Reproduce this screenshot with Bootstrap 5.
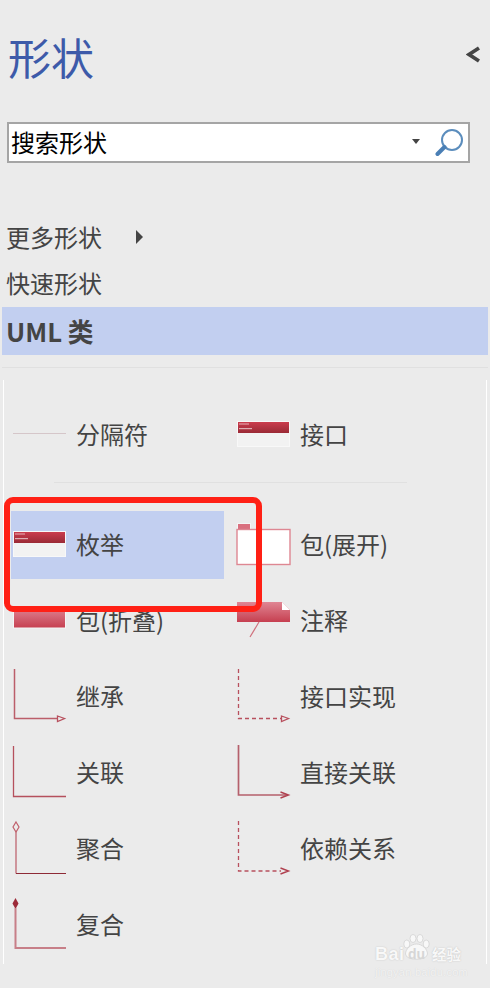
<!DOCTYPE html>
<html lang="zh-CN">
<head>
  <meta charset="UTF-8" />
  <title>形状</title>
  <link rel="stylesheet" href="https://cdn.jsdelivr.net/npm/bootstrap@5.3.0/dist/css/bootstrap.min.css" />
  <style>
    body {
      background: #ebebeb;
      width: 490px;
      height: 988px;
      overflow: hidden;
      font-family: "Noto Sans CJK SC", "Liberation Sans", sans-serif;
      color: #444;
    }
    .pane { position: relative; width: 490px; height: 988px; }
    .pane-head { height: 122px; padding: 31px 10px 0 8px; }
    .pane-title { font-size: 43px; line-height: 50px; color: #3d5aa9; font-weight: 400; margin: 0; }
    .pane-toggle { margin-top: 15px; }
    .search-box {
      margin-left: 7px;
      width: 463px;
      height: 41px;
      background: #fff;
      border: 2px solid #a5a5a5;
      padding: 0 5px 0 2px;
      font-size: 24px;
      line-height: 37px;
      color: #000;
    }
    .search-text { padding-bottom: 3px; }
    .search-caret {
      width: 0; height: 0;
      border-left: 4.5px solid transparent;
      border-right: 4.5px solid transparent;
      border-top: 5px solid #444;
      margin-right: 15px;
      margin-bottom: 3px;
    }
    .stencil-list { margin: 52px 2px 0 2px; border-radius: 0; background: transparent; }
    .stencil-list .list-group-item {
      background: transparent;
      border: 0;
      border-radius: 0;
      color: #444;
      font-size: 24px;
      line-height: 44px;
      height: 46px;
      padding: 0 0 2px 4px;
    }
    .stencil-list .list-group-item.current { background: #c2cff0; height: 48px; line-height: 47px; padding: 0 0 1px 4px; font-size: 25.7px; font-weight: 700; }
    .more-arrow {
      width: 0; height: 0;
      border-top: 7px solid transparent;
      border-bottom: 7px solid transparent;
      border-left: 7px solid #444;
      margin-left: 34px;
    }
    .pane-rule { margin: 12px 2px 0; height: 1px; background: #e0e0e0; }
    .shape-panel {
      margin: 12px 0 0 3px;
      width: 484px;
      height: 584px;
      border-left: 1px solid #fff;
      border-right: 1px solid #fff;
      padding: 21px 0 0 7px;
    }
    .shape-grid { display: grid; grid-template-columns: 213px 213px; column-gap: 11px; row-gap: 8px; }
    .shape-item { height: 68px; font-size: 24px; line-height: 66px; white-space: nowrap; }
    .shape-item svg { flex: none; margin-right: 5px; }
    .shape-item.picked { background: #c2cff0; }
    .group-rule { height: 1px; background: #e0e0e0; margin: 13px 0 28px 43px; width: 353px; }
    .red-frame {
      position: absolute;
      left: 4px; top: 497px;
      width: 258px; height: 115px;
      border: 6px solid #ff2015;
      border-radius: 9px;
    }
    .watermark {
      position: absolute;
      left: 375px; top: 934px;
      width: 90px; height: 42px;
      color: #f8f8f8;
      font-family: "Liberation Sans", sans-serif;
      text-shadow: 0 0 1.5px #bdbdbd;
    }
    .wm-bai { position: absolute; left: 0; top: 10px; font-size: 18px; line-height: 20px; font-weight: 700; letter-spacing: 0.5px; }
    .wm-cn { position: absolute; left: 57px; top: 10px; font-family: "Noto Sans CJK SC", sans-serif; font-size: 14.5px; line-height: 20px; font-weight: 700; white-space: nowrap; }
    .wm-url { position: absolute; left: 0; top: 32px; font-size: 11px; line-height: 12px; letter-spacing: 0.25px; white-space: nowrap; color: #f3f3f3; text-shadow: 0 0 1px #cfcfcf; }
    .wm-paw { position: absolute; left: 28px; top: 0; }
    .wm-du { position: absolute; left: 33px; top: 13px; font-size: 14px; line-height: 14px; font-weight: 700; color: #d6d6d6; text-shadow: none; }
  </style>
</head>
<body>
  <div class="pane">
    <!-- title and collapse arrow -->
    <div class="pane-head d-flex justify-content-between align-items-start">
      <h1 class="pane-title">形状</h1>
      <svg class="pane-toggle" width="14" height="17" viewBox="0 0 14 17"><path d="M13 2 L3 8.5 L13 15" fill="none" stroke="#444" stroke-width="3.8"/></svg>
    </div>

    <div class="search-box d-flex align-items-center">
      <span class="search-text flex-grow-1">搜索形状</span>
      <span class="search-caret"></span>
      <svg width="28" height="28" viewBox="0 0 28 28"><circle cx="17" cy="11" r="10" fill="#fff" stroke="#5b8dbd" stroke-width="2"/><path d="M9.5 18 L2.5 25" stroke="#4a7fb5" stroke-width="4" stroke-linecap="round"/></svg>
    </div>

    <div class="list-group stencil-list">
      <div class="list-group-item d-flex align-items-center">更多形状<span class="more-arrow"></span></div>
      <div class="list-group-item">快速形状</div>
      <div class="list-group-item current">UML 类</div>
    </div>
    <div class="pane-rule"></div>

    <div class="shape-panel">
      <div class="shape-grid">
        <div class="shape-item d-flex">
          <svg width="60" height="68"><line x1="2" y1="32.5" x2="55" y2="32.5" stroke="#d5c6c9"/></svg>分隔符
        </div>
        <div class="shape-item d-flex">
          <svg width="60" height="68"><use href="#classShape"/></svg>接口
        </div>
      </div>
      <div class="group-rule"></div>
      <div class="shape-grid">
        <div class="shape-item picked d-flex">
          <svg width="60" height="68"><use href="#classShape"/></svg>枚举
        </div>
        <div class="shape-item d-flex">
          <svg width="60" height="68">
            <rect x="2.5" y="12.5" width="13" height="6" fill="#d9707f" stroke="#f5f5f5"/>
            <rect x="2" y="18.5" width="53" height="35" fill="#fff" stroke="#de8792" stroke-width="1.4"/>
          </svg>包(展开)
        </div>
        <div class="shape-item d-flex">
          <svg width="60" height="68"><rect x="2.5" y="20" width="52" height="21" fill="url(#pinkFade)" stroke="#f5f5f5"/></svg>包(折叠)
        </div>
        <div class="shape-item d-flex">
          <svg width="60" height="68">
            <path d="M2 15 H47 L55 23 V35 H2 Z" fill="url(#pinkFade)"/>
            <path d="M47 15 L55 23 H47 Z" fill="#fff"/>
            <line x1="24" y1="35" x2="15" y2="50" stroke="#d0707c" stroke-width="1.2"/>
          </svg>注释
        </div>
        <div class="shape-item d-flex">
          <svg width="60" height="68">
            <path d="M3.5 6 V55.5 H46" fill="none" stroke="#bb5e6a" stroke-width="1.5"/>
            <path d="M46.5 53 L53.5 55.5 L46.5 58.5 Z" fill="none" stroke="#b8505e" stroke-width="1.3"/>
          </svg>继承
        </div>
        <div class="shape-item d-flex">
          <svg width="60" height="68">
            <path d="M3.5 6 V55.5 H46" fill="none" stroke="#b8505e" stroke-width="1.3" stroke-dasharray="4 3"/>
            <path d="M46.5 53 L53.5 55.5 L46.5 58.5 Z" fill="none" stroke="#b8505e" stroke-width="1.3"/>
          </svg>接口实现
        </div>
        <div class="shape-item d-flex">
          <svg width="60" height="68"><path d="M2.5 7 V57.5 H55" fill="none" stroke="#b5505d" stroke-width="1.3"/></svg>关联
        </div>
        <div class="shape-item d-flex">
          <svg width="60" height="68">
            <path d="M3.5 6 V56 H53" fill="none" stroke="#b5606c" stroke-width="1.7"/>
            <path d="M45.5 53 L53.5 56 L45.5 59" fill="none" stroke="#b0404f" stroke-width="1.4"/>
          </svg>直接关联
        </div>
        <div class="shape-item d-flex">
          <svg width="60" height="68">
            <path d="M5 7 L8 12 L5 17 L2 12 Z" fill="none" stroke="#c0606c" stroke-width="1.2"/>
            <path d="M5 17 V58.5" fill="none" stroke="#c77f88" stroke-width="1.6"/>
            <path d="M5 58.5 H55" fill="none" stroke="#8e2a36" stroke-width="1.2"/>
          </svg>聚合
        </div>
        <div class="shape-item d-flex">
          <svg width="60" height="68">
            <path d="M3.5 6 V56 H46" fill="none" stroke="#b8505e" stroke-width="1.3" stroke-dasharray="4 3"/>
            <path d="M45.5 53 L53.5 56 L45.5 59" fill="none" stroke="#b0404f" stroke-width="1.4"/>
          </svg>依赖关系
        </div>
        <div class="shape-item d-flex">
          <svg width="60" height="68">
            <path d="M4.5 7 L7.5 12.5 L4.5 18 L1.5 12.5 Z" fill="#9c2a38"/>
            <path d="M4.5 17 V57 H55" fill="none" stroke="#c77f88" stroke-width="2"/>
          </svg>复合
        </div>
      </div>
    </div>

    <!-- callout drawn over the screenshot -->
    <div class="red-frame"></div>

    <div class="watermark">
      <span class="wm-bai">Bai</span>
      <svg class="wm-paw" width="27" height="27" viewBox="0 0 27 27" fill="#f8f8f8" stroke="#cfcfcf" stroke-width="0.7">
        <ellipse cx="3.8" cy="10" rx="3" ry="4"/><ellipse cx="10" cy="4.5" rx="3" ry="4"/><ellipse cx="17" cy="4.5" rx="3" ry="4"/><ellipse cx="23.2" cy="10" rx="3" ry="4"/>
        <path d="M13.5 10 C8 10 2.5 15 2.5 20 C2.5 27 24.5 27 24.5 20 C24.5 15 19 10 13.5 10 Z"/>
      </svg>
      <span class="wm-du">du</span>
      <span class="wm-cn">经验</span>
      <span class="wm-url">jingyan.baidu.com</span>
    </div>
  </div>

  <!-- shared gradients and the class shape -->
  <svg width="0" height="0" class="position-absolute">
    <defs>
      <linearGradient id="redFade" x1="0" y1="0" x2="0" y2="1"><stop offset="0" stop-color="#cb3c4d"/><stop offset="1" stop-color="#9a2a36"/></linearGradient>
      <linearGradient id="pinkFade" x1="0" y1="0" x2="0" y2="1"><stop offset="0" stop-color="#e08593"/><stop offset="1" stop-color="#c63f50"/></linearGradient>
      <g id="classShape">
        <rect x="2.5" y="20.5" width="52" height="25" fill="#f2f2f2" stroke="#f8f8f8"/>
        <rect x="3" y="21" width="51" height="11" fill="url(#redFade)"/>
        <rect x="4" y="22.5" width="10" height="1" fill="#fff" opacity="0.6"/>
        <rect x="4" y="27" width="13" height="1.2" fill="#fff" opacity="0.6"/>
      </g>
    </defs>
  </svg>
  <script src="https://cdn.jsdelivr.net/npm/bootstrap@5.3.0/dist/js/bootstrap.bundle.min.js"></script>
</body>
</html>
